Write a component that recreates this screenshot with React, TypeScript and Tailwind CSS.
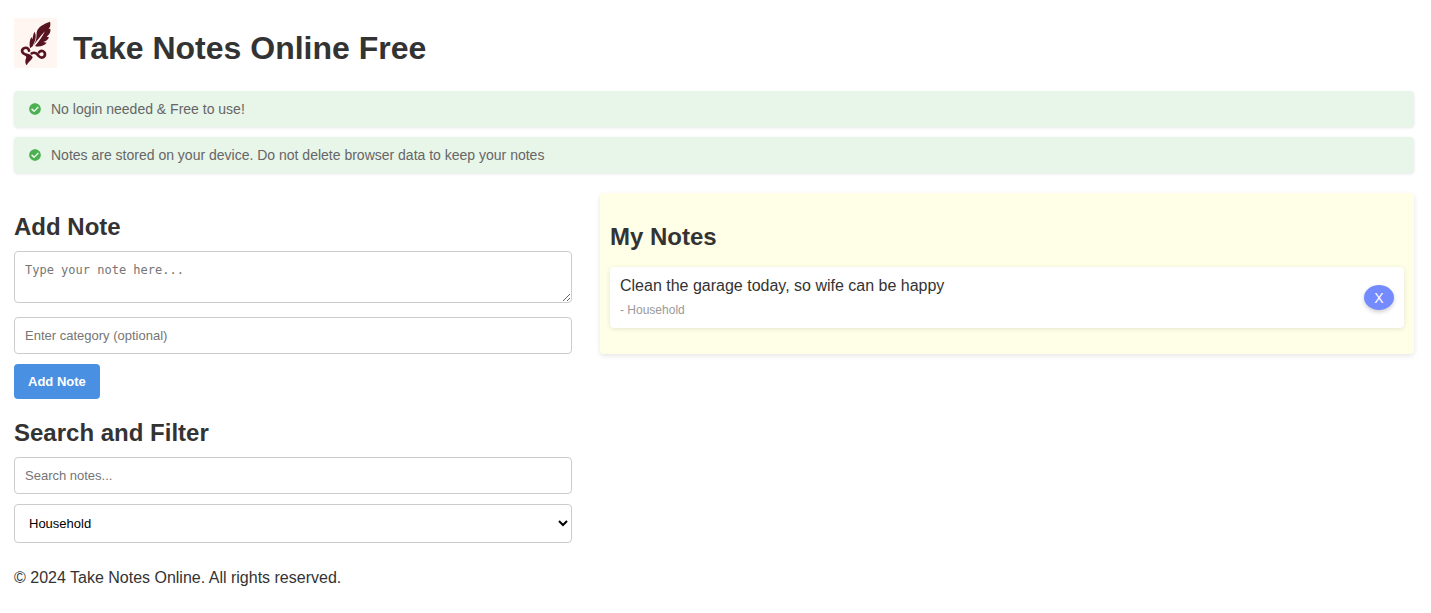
import { useState } from "react";
import { FaCheckCircle } from "react-icons/fa";

type Note = { id: number; text: string; category: string };

const notices = [
  "No login needed & Free to use!",
  "Notes are stored on your device. Do not delete browser data to keep your notes",
];

const fieldClass =
  "block w-full rounded border border-[#ccc] bg-white px-2.5 py-2 text-[13px] leading-[19px] text-black placeholder:text-[#757575]";

function FeatherLogo() {
  return (
    <svg width="43" height="50" viewBox="0 0 129 150" fill="none" aria-hidden="true">
      <rect width="129" height="150" fill="#fff6f1" />
      <g fill="#571420">
        <path d="M108 11C92 16 76 25 70 37C66 46 69 56 66 66L59 82C68 70 78 56 93 40C84 58 74 71 63 84C75 88 90 84 98 74L88 72C96 70 103 65 105 58L98 56C106 50 111 41 109 32L104 33C110 26 110 18 108 11Z" />
        <path d="M62 41C66 50 66 57 64 65L56 85L48 91C46 78 46 68 52 57L55 64C57 56 57 48 62 41Z" />
      </g>
      <g stroke="#571420" strokeWidth="8" strokeLinecap="round" strokeLinejoin="round">
        <path d="M45 98C44 90 36 87 29 91C21 96 24 106 33 109C40 111 46 110 51 117" />
        <path d="M53 106C63 101 68 107 74 114C81 122 92 119 93 110C93 99 82 95 75 103" />
      </g>
      <path d="M32 109C40 112 50 109 56 118C53 127 44 130 38 142C31 133 35 124 37 118Z" fill="#571420" />
    </svg>
  );
}

export default function App() {
  const [notes, setNotes] = useState<Note[]>([
    { id: 1, text: "Clean the garage today, so wife can be happy", category: "Household" },
  ]);
  const [text, setText] = useState("");
  const [category, setCategory] = useState("");
  const [search, setSearch] = useState("");
  const [filter, setFilter] = useState("Household");

  const categories = Array.from(new Set(notes.map(n => n.category).concat("Household"))).filter(Boolean);
  const visible = notes.filter(
    n =>
      n.text.toLowerCase().includes(search.toLowerCase()) &&
      (filter === "" || n.category === filter)
  );

  function addNote(e: React.FormEvent) {
    e.preventDefault();
    if (!text.trim()) return;
    setNotes([...notes, { id: Date.now(), text, category }]);
    setText("");
    setCategory("");
  }

  return (
    <div className="pt-[18px] pr-[17px] pb-6 pl-3.5 font-['Liberation_Sans',Arial,sans-serif] text-base text-[#333]">
      <header className="flex items-center gap-4">
        <FeatherLogo />
        <h1 className="pt-2.5 text-[32px] leading-10 font-bold">Take Notes Online Free</h1>
      </header>

      <ul className="mt-[23px] flex flex-col gap-2.5">
        {notices.map(notice => (
          <li
            key={notice}
            className="flex items-center gap-2.5 rounded bg-[#e8f5e9] px-[15px] py-2 text-sm text-[#666] shadow-[0_1px_3px_rgba(0,0,0,0.1)]"
          >
            <FaCheckCircle className="h-3 w-3 text-[#4caf50]" />
            {notice}
          </li>
        ))}
      </ul>

      <main className="mt-5 grid grid-cols-[558fr_814fr] items-start gap-7">
        <div className="pt-5">
          <form onSubmit={addNote}>
            <h2 className="text-2xl leading-7 font-bold">Add Note</h2>
            <textarea
              aria-label="Note"
              rows={2}
              className="mt-2.5 block h-[52px] w-full resize rounded border border-[#ccc] bg-white p-2.5 font-['DejaVu_Sans_Mono',monospace] text-xs leading-4 text-black placeholder:text-[#757575]"
              placeholder="Type your note here..."
              value={text}
              onChange={e => setText(e.target.value)}
            />
            <input
              aria-label="Category"
              className={`mt-3.5 ${fieldClass}`}
              placeholder="Enter category (optional)"
              value={category}
              onChange={e => setCategory(e.target.value)}
            />
            <button
              type="submit"
              className="mt-2.5 block rounded bg-[#4a90e2] px-3.5 py-2 text-[13px] leading-[19px] font-bold text-white"
            >
              Add Note
            </button>
          </form>

          <section className="mt-5">
            <h2 className="text-2xl leading-7 font-bold">Search and Filter</h2>
            <input
              aria-label="Search notes"
              className={`mt-2.5 ${fieldClass}`}
              placeholder="Search notes..."
              value={search}
              onChange={e => setSearch(e.target.value)}
            />
            <select
              aria-label="Filter by category"
              className="mt-2.5 block h-[39px] w-full rounded border border-[#ccc] bg-white px-2.5 text-[13px] text-black"
              value={filter}
              onChange={e => setFilter(e.target.value)}
            >
              <option value="">All Categories</option>
              {categories.map(c => (
                <option key={c} value={c}>{c}</option>
              ))}
            </select>
          </section>
        </div>

        <section className="rounded bg-[#ffffe8] px-2.5 pt-[30px] pb-[26px] shadow-[0_2px_5px_rgba(0,0,0,0.1)]">
          <h2 className="text-2xl leading-7 font-bold">My Notes</h2>
          <ul className="mt-4 flex flex-col gap-2.5">
            {visible.map(note => (
              <li
                key={note.id}
                className="flex items-center justify-between rounded bg-white p-2.5 shadow-[0_1px_5px_rgba(0,0,0,0.1)]"
              >
                <div>
                  <p className="leading-[18px]">{note.text}</p>
                  {note.category && (
                    <p className="mt-2 text-xs leading-[15px] text-[#999]">- {note.category}</p>
                  )}
                </div>
                <button
                  type="button"
                  aria-label="Delete note"
                  className="h-[25px] w-[30px] rounded-[50%] bg-[#748bff] text-sm text-white shadow-[0_2px_4px_rgba(0,0,0,0.2)]"
                  onClick={() => setNotes(notes.filter(n => n.id !== note.id))}
                >
                  X
                </button>
              </li>
            ))}
          </ul>
        </section>
      </main>

      <footer className="mt-[23px]">© 2024 Take Notes Online. All rights reserved.</footer>
    </div>
  );
}
